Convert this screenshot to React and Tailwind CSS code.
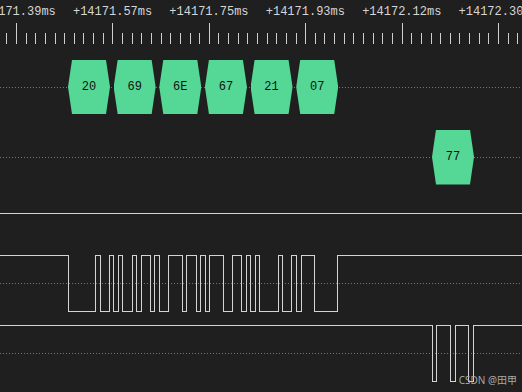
import React from "react";

const BIT = 4.565;
const FRAME = 45.65;

function uartPath(frames, width, hi, lo) {
  let level = 1;
  let d = `M0 ${hi}`;
  const events = [];
  frames.forEach(({ start, byte }) => {
    const bits = [0];
    for (let i = 0; i < 8; i++) bits.push((byte >> i) & 1);
    bits.push(1);
    bits.forEach((b, i) => events.push({ x: start + i * BIT, b }));
  });
  events.forEach(({ x: ex, b }) => {
    if (b !== level) {
      const xx = Math.round(ex) + 0.5;
      d += ` H${xx} V${b ? hi : lo}`;
      level = b;
    }
  });
  d += ` H${width}`;
  return d;
}

const row1Bytes = [0x20, 0x69, 0x6e, 0x67, 0x21, 0x07];
const row1Labels = ["20", "69", "6E", "67", "21", "07"];
const frames1 = row1Bytes.map((byte, i) => ({ start: 67.7 + FRAME * i, byte }));
const frames2 = [{ start: 431.7, byte: 0x77 }];

const ticks = [];
for (let i = -1; i < 55; i++) {
  ticks.push({ x: Math.round(16 + 9.64 * i) + 0.5, major: ((i % 10) + 10) % 10 === 0 });
}

const labels = ["+14171.39ms", "+14171.57ms", "+14171.75ms", "+14171.93ms", "+14172.12ms", "+14172.30ms"];

const mono = { fontFamily: '"Liberation Mono", "DejaVu Sans Mono", monospace' };

function Bubble({ children, h }) {
  return (
    <div
      className={`relative w-[42px] ${h} shrink-0 bg-[#55d896] flex items-center justify-center text-[12px] text-[#111] [clip-path:polygon(4px_0,calc(100%_-_4px)_0,100%_50%,calc(100%_-_4px)_100%,4px_100%,0_50%)]`}
      style={mono}
    >
      {children}
    </div>
  );
}

function Dotted() {
  return (
    <div className="absolute left-0 right-0 top-1/2 h-px bg-[repeating-linear-gradient(to_right,#777_0_1px,transparent_1px_3px)]" />
  );
}

export default function App() {
  return (
    <div className="relative w-[522px] h-[392px] overflow-hidden bg-[#1f1f1f] flex flex-col">
      {/* Ruler */}
      <div className="h-[50px] flex flex-col shrink-0">
        <div className="h-[23px] flex ml-[-32px] pt-[5px] text-[12px] leading-[14px] text-[#d6d6d6]" style={mono}>
          {labels.map((l) => (
            <div key={l} className="w-[96.4px] shrink-0 text-center whitespace-nowrap">
              {l}
            </div>
          ))}
        </div>
        <svg width="522" height="21" className="block" shapeRendering="crispEdges">
          {ticks.map((t, i) => (
            <line key={i} x1={t.x} x2={t.x} y1={t.major ? 0 : 10} y2={21} stroke="#cfcfcf" strokeWidth="1" />
          ))}
        </svg>
      </div>

      {/* Decoded row 1 */}
      <div className="relative h-[74px] shrink-0 flex items-center pl-[68px] gap-[3.65px]">
        <Dotted />
        {row1Labels.map((l) => (
          <Bubble key={l} h="h-[54px]">{l}</Bubble>
        ))}
      </div>

      {/* Decoded row 2 */}
      <div className="relative h-[66px] shrink-0 flex items-center pl-[432px]">
        <Dotted />
        <Bubble h="h-[55px]">77</Bubble>
      </div>

      {/* Idle line */}
      <div className="h-[46px] shrink-0">
        <svg width="522" height="46" className="block" shapeRendering="crispEdges">
          <line x1="0" x2="522" y1="23.5" y2="23.5" stroke="#d4d4d4" strokeWidth="1" />
        </svg>
      </div>

      {/* Waveform 1 */}
      <div className="h-[82px] shrink-0">
        <svg width="522" height="82" className="block" shapeRendering="crispEdges">
          <line x1="0" x2="522" y1="47.5" y2="47.5" stroke="#777" strokeWidth="1" strokeDasharray="1 2" />
          <path d={uartPath(frames1, 522, 19.5, 75.5)} fill="none" stroke="#d4d4d4" strokeWidth="1" />
        </svg>
      </div>

      {/* Waveform 2 */}
      <div className="h-[74px] shrink-0">
        <svg width="522" height="74" className="block" shapeRendering="crispEdges">
          <line x1="0" x2="522" y1="35.5" y2="35.5" stroke="#777" strokeWidth="1" strokeDasharray="1 2" />
          <path d={uartPath(frames2, 522, 7.5, 63.5)} fill="none" stroke="#d4d4d4" strokeWidth="1" />
        </svg>
      </div>

      {/* Watermark */}
      <div
        className="absolute right-[5px] bottom-[6px] text-[10px] leading-[12px] text-[#a8a8a8]"
        style={{ fontFamily: '"Noto Sans", "Noto Sans CJK SC", sans-serif' }}
      >
        CSDN @田甲
      </div>
    </div>
  );
}
